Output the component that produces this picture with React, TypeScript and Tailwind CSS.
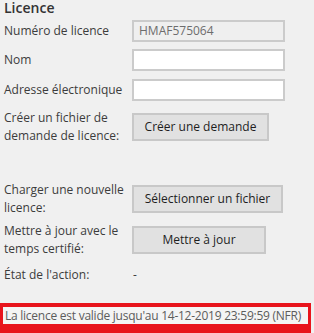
import React from 'react';

const font = { fontFamily: '"Open Sans", "Noto Sans", sans-serif' };

const Label: React.FC<{ lines: string[] }> = ({ lines }) => (
  <div className="w-[132px] shrink-0 pl-[4px] text-[12px] leading-[18px] text-[#3c3c3c] whitespace-nowrap">
    {lines.map((l, i) => (
      <div key={i}>{l}</div>
    ))}
  </div>
);

const Btn: React.FC<{ w: string; children: React.ReactNode }> = ({ w, children }) => (
  <button
    className={`${w} h-[28px] bg-[#e1e1e1] border-2 border-[#c8c8c8] text-[12px] text-[#1e1e1e] leading-none`}
  >
    {children}
  </button>
);

export default function App() {
  return (
    <div className="w-[314px] h-[333px] bg-[#f0f0f0] overflow-hidden" style={font}>
      {/* title */}
      <div className="pl-[4px] h-[16px] text-[14px] leading-[16px] font-semibold text-[#333]">
        Licence
      </div>

      {/* form */}
      <div className="mt-[4px] flex items-center h-[22px]">
        <Label lines={['Numéro de licence']} />
        <div className="w-[153px] h-[22px] border-2 border-[#cbcbcb] bg-[#efefef] pl-[5px] text-[12px] leading-[18px] text-[#6d6d6d]">
          HMAF575064
        </div>
      </div>
      <div className="mt-[7px] flex items-center h-[22px]">
        <Label lines={['Nom']} />
        <div className="w-[153px] h-[22px] border-2 border-[#cbcbcb] bg-white" />
      </div>
      <div className="mt-[8px] flex items-center h-[22px]">
        <Label lines={['Adresse électronique']} />
        <div className="w-[153px] h-[22px] border-2 border-[#cbcbcb] bg-white" />
      </div>

      <div className="mt-[8px] flex items-center h-[36px]">
        <Label lines={['Créer un fichier de', 'demande de licence:']} />
        <Btn w="w-[137px]">Créer une demande</Btn>
      </div>

      <div className="mt-[36px] flex items-center h-[36px]">
        <Label lines={['Charger une nouvelle', 'licence:']} />
        <Btn w="w-[151px]">Sélectionner un fichier</Btn>
      </div>

      <div className="mt-[5px] flex items-center h-[36px]">
        <Label lines={['Mettre à jour avec le', 'temps certifié:']} />
        <Btn w="w-[134px]">Mettre à jour</Btn>
      </div>

      <div className="mt-[8px] flex items-center h-[18px]">
        <Label lines={["État de l'action:"]} />
        <span className="pl-[1px] text-[12px] leading-[18px] text-[#3c3c3c]">-</span>
      </div>

      {/* status bar */}
      <div className="mt-[19px] w-[311px] h-[30px] border-[#e8141c] border-t-[4px] border-x-[3px] border-b-[9px] bg-[#f4f4f4] overflow-hidden">
        <div className="pl-[2px] text-[12px] leading-[17px] tracking-[-0.25px] text-[#5c5c5c] whitespace-nowrap">
          La licence est valide jusqu'au 14-12-2019 23:59:59 (NFR)
        </div>
      </div>
    </div>
  );
}
